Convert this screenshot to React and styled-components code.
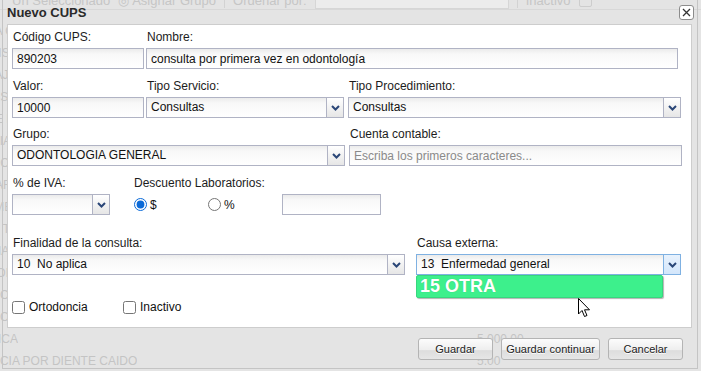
import React from 'react'
import styled, { createGlobalStyle } from 'styled-components'

const GlobalStyle = createGlobalStyle`
  html, body {
    margin: 0;
    padding: 0;
  }
  body {
    background: #e4e4e4;
    font-family: 'Liberation Sans', Arial, sans-serif;
  }
`

const Screen = styled.div`
  position: relative;
  width: 701px;
  height: 371px;
  overflow: hidden;
  background: #e4e4e4;
  font-family: 'Liberation Sans', Arial, sans-serif;
`

/* faded app behind the modal */
const GhostBar = styled.div`
  display: flex;
  align-items: center;
  gap: 8px;
  height: 18px;
  margin-top: -9px;
  padding-left: 12px;
  font-size: 13px;
  color: #c6c6c6;
  border-bottom: 1px solid #d8d8d8;
`

const GhostSep = styled.span`
  width: 1px;
  height: 16px;
  background: #d2d2d2;
`

const GhostSelect = styled.span`
  width: 192px;
  height: 16px;
  border: 1px solid #d6d6d6;
  background: #ececec;
`

const GhostBox = styled.span`
  width: 11px;
  height: 11px;
  border: 1px solid #cdcdcd;
  border-radius: 2px;
`

const GhostTable = styled.div`
  padding-top: 10px;
`

const GhostRow = styled.div`
  display: flex;
  height: 22px;
  align-items: center;
  font-size: 12px;
  color: #c4c4c4;
  white-space: nowrap;
`

const GhostName = styled.span`
  width: 538px;
  margin-left: -61px;
`

const GhostText = styled.span`
  display: inline-block;
  vertical-align: top;
  max-width: ${p => (p.$clip ? '68px' : 'none')};
  overflow: hidden;
`

/* dialog */
const Dialog = styled.div`
  position: absolute;
  left: 2px;
  top: 0;
  width: 694px;
  height: 368px;
  border: 1px solid #c4c4c4;
  border-top: none;
  display: flex;
  flex-direction: column;
`

const TitleBar = styled.div`
  position: relative;
  height: 24px;
  display: flex;
  align-items: center;
  padding-left: 4px;
  font-size: 13px;
  font-weight: 700;
  color: #2a2a2a;
`

const CloseButton = styled.button`
  position: absolute;
  right: 3px;
  top: 5px;
  width: 15px;
  height: 15px;
  padding: 0;
  display: flex;
  align-items: center;
  justify-content: center;
  background: #fff;
  border: 1px solid #8c8c8c;
  border-radius: 3px;
`

const Panel = styled.div`
  height: 304px;
  box-sizing: border-box;
  margin: 0 5px 0 4px;
  padding: 5px 0 0 4px;
  background: #fff;
  border: 1px solid #cdcdcd;
`

const Row = styled.div`
  display: flex;
  align-items: flex-start;
  margin-top: ${p => p.$mt || 0}px;
`

const Field = styled.div`
  position: relative;
  display: flex;
  flex-direction: column;
  width: ${p => p.$w}px;
  margin-left: ${p => p.$ml || 0}px;
`

const Label = styled.label`
  height: 18px;
  line-height: 14px;
  padding-left: 1px;
  font-size: 12px;
  color: #1c1c1c;
  white-space: nowrap;
`

const Input = styled.input`
  box-sizing: border-box;
  width: 100%;
  height: 21px;
  margin: 0;
  padding: 0 4px;
  border: 1px solid #b0b3c4;
  background: linear-gradient(to bottom, #ebebeb 0, #f8f8f8 5px, #fff 100%);
  font-family: 'Liberation Sans', Arial, sans-serif;
  font-size: 12px;
  color: #111;
  outline: none;

  &::placeholder {
    color: #8a8a8a;
  }
`

const SelectBox = styled.div`
  box-sizing: border-box;
  display: flex;
  align-items: stretch;
  width: 100%;
  height: 21px;
  border: 1px solid ${p => (p.$focus ? '#7fb1e2' : '#b0b3c4')};
  background: linear-gradient(to bottom, #ebebeb 0, #f8f8f8 5px, #fff 100%);
  font-size: 12px;
  color: #111;
`

const SelectText = styled.span`
  flex: 1;
  padding-left: 4px;
  line-height: 19px;
  white-space: pre;
`

const ArrowButton = styled.span`
  width: 16px;
  display: flex;
  align-items: center;
  justify-content: center;
  border-left: 1px solid ${p => (p.$focus ? '#7fb1e2' : '#b0b3c4')};
  background: ${p =>
    p.$focus
      ? 'linear-gradient(#e8f2fd, #d3e6fb)'
      : 'linear-gradient(#ffffff, #e6e6e6)'};
`

const RadioLine = styled.div`
  display: flex;
  align-items: center;
  height: 21px;
`

const RadioLabel = styled.label`
  display: flex;
  align-items: center;
  gap: 3px;
  width: ${p => p.$w}px;
  margin-left: 1px;
  font-size: 12px;
  color: #111;

  input {
    width: 13px;
    height: 13px;
    margin: 0;
    accent-color: #0b6ad8;
  }
`

const CheckLabel = styled.label`
  display: flex;
  align-items: center;
  gap: 4px;
  width: ${p => p.$w}px;
  font-size: 12px;
  color: #111;

  input {
    width: 13px;
    height: 13px;
    margin: 0;
  }
`

const Dropdown = styled.div`
  position: absolute;
  left: 0;
  top: 39px;
  width: 247px;
  height: 23px;
  box-sizing: border-box;
  padding-left: 3px;
  display: flex;
  align-items: center;
  background: #3df08c;
  border: 1px solid #38d67e;
  border-radius: 2px;
  box-shadow: 1px 1px 1px rgba(0, 0, 0, 0.3);
  font-family: 'Liberation Sans', Arial, sans-serif;
  font-size: 18px;
  font-weight: 700;
  color: #fff;
  text-shadow: 0 0 1px rgba(0, 0, 0, 0.2);
`

const ButtonPane = styled.div`
  display: flex;
  justify-content: flex-end;
  gap: 8px;
  padding: 10px 14px 0 0;
`

const ActionButton = styled.button`
  width: ${p => p.$w}px;
  height: 22px;
  padding: 0;
  border: 1px solid #b4b4b4;
  border-radius: 3px;
  background: linear-gradient(#fcfcfc 0, #eeeeee 55%, #dddddd 58%, #e6e6e6 100%);
  font-family: 'Liberation Sans', Arial, sans-serif;
  font-size: 11px;
  color: #222;
  text-shadow: 0 1px 0 #fff;
`

const Cursor = styled.svg`
  position: absolute;
  left: 578px;
  top: 298px;
`

const Chevron = () => (
  <svg width="9" height="6" viewBox="0 0 9 6">
    <path d="M1 1 L4.5 4.5 L8 1" fill="none" stroke="#2a4677" strokeWidth="2" />
  </svg>
)

const Select = ({ value, focus }) => (
  <SelectBox $focus={focus}>
    <SelectText>{value}</SelectText>
    <ArrowButton $focus={focus}>
      <Chevron />
    </ArrowButton>
  </SelectBox>
)

const ghostRows = [
  'CONSULTA ODONTOLOGICA GENERAL',
  'PROFILAXIS DENTAL',
  'DETARTRAJE SUPRAGINGIVAL',
  'SELLANTES DE FOSAS',
  'RESINA DE FOTOCURADO',
  'EXODONCIA SIMPLE',
  'ENDODONCIA UNIRRADICULAR',
  'RADIOGRAFIA PERIAPICAL',
  'CORONA METAL PORCELANA',
  'PROTESIS TOTAL',
  'ORTOPEDIA FUNCIONAL',
  'RETENEDOR HAWLEY',
  'ORTODONCIA FIJA',
  'ORTODONCIA ESTETICA',
  'ORTOPEDICA',
  'ORTODONCIA POR DIENTE CAIDO'
]

const prices = { 14: '5.000,00', 15: '5.00' }

export default function App() {
  return (
    <Screen>
      <GlobalStyle />
      <GhostBar>
        <span>Un Seleccionado</span>
        <span>◎ Asignar Grupo</span>
        <GhostSep />
        <span>Ordenar por:</span>
        <GhostSelect />
        <GhostSep />
        <span>Inactivo</span>
        <GhostBox />
      </GhostBar>
      <GhostTable>
        {ghostRows.map((name, i) => (
          <GhostRow key={i}>
            <GhostName>
              <GhostText $clip={i < 14}>{name}</GhostText>
            </GhostName>
            <span>{prices[i] || ''}</span>
          </GhostRow>
        ))}
      </GhostTable>

      <Dialog>
        <TitleBar>
          Nuevo CUPS
          <CloseButton type="button">
            <svg width="9" height="9" viewBox="0 0 9 9">
              <path d="M1 1 L8 8 M8 1 L1 8" stroke="#333" strokeWidth="1.3" />
            </svg>
          </CloseButton>
        </TitleBar>

        <Panel>
          <Row>
            <Field $w={132}>
              <Label>Código CUPS:</Label>
              <Input defaultValue="890203" />
            </Field>
            <Field $w={532} $ml={2}>
              <Label>Nombre:</Label>
              <Input defaultValue="consulta por primera vez en odontología" />
            </Field>
          </Row>

          <Row $mt={10}>
            <Field $w={132}>
              <Label>Valor:</Label>
              <Input defaultValue="10000" />
            </Field>
            <Field $w={198} $ml={2}>
              <Label>Tipo Servicio:</Label>
              <Select value="Consultas" />
            </Field>
            <Field $w={333} $ml={4}>
              <Label>Tipo Procedimiento:</Label>
              <Select value="Consultas" />
            </Field>
          </Row>

          <Row $mt={9}>
            <Field $w={333}>
              <Label>Grupo:</Label>
              <Select value="ODONTOLOGIA GENERAL" />
            </Field>
            <Field $w={333} $ml={4}>
              <Label>Cuenta contable:</Label>
              <Input placeholder="Escriba los primeros caracteres..." />
            </Field>
          </Row>

          <Row $mt={10}>
            <Field $w={98}>
              <Label>% de IVA:</Label>
              <Select value="" />
            </Field>
            <Field $w={149} $ml={23}>
              <Label>Descuento Laboratorios:</Label>
              <RadioLine>
                <RadioLabel $w={73}>
                  <input type="radio" name="desc" defaultChecked />$
                </RadioLabel>
                <RadioLabel $w={60}>
                  <input type="radio" name="desc" />%
                </RadioLabel>
              </RadioLine>
            </Field>
            <Field $w={99}>
              <Label />
              <Input />
            </Field>
          </Row>

          <Row $mt={21}>
            <Field $w={393}>
              <Label>Finalidad de la consulta:</Label>
              <Select value="10  No aplica" />
            </Field>
            <Field $w={265} $ml={11}>
              <Label>Causa externa:</Label>
              <Select value="13  Enfermedad general" focus />
              <Dropdown>15 OTRA</Dropdown>
            </Field>
          </Row>

          <Row $mt={25}>
            <CheckLabel $w={111}>
              <input type="checkbox" />Ortodoncia
            </CheckLabel>
            <CheckLabel $w={80}>
              <input type="checkbox" />Inactivo
            </CheckLabel>
          </Row>
        </Panel>

        <ButtonPane>
          <ActionButton $w={75}>Guardar</ActionButton>
          <ActionButton $w={99}>Guardar continuar</ActionButton>
          <ActionButton $w={75}>Cancelar</ActionButton>
        </ButtonPane>
      </Dialog>

      <Cursor width="13" height="20" viewBox="0 0 13 20">
        <path
          d="M0.5 0.5 L0.5 16 L4 12.5 L6.5 18.5 L9 17.5 L6.5 11.8 L11.5 11.8 Z"
          fill="#fff"
          stroke="#000"
          strokeWidth="1"
          strokeLinejoin="round"
        />
      </Cursor>
    </Screen>
  )
}
